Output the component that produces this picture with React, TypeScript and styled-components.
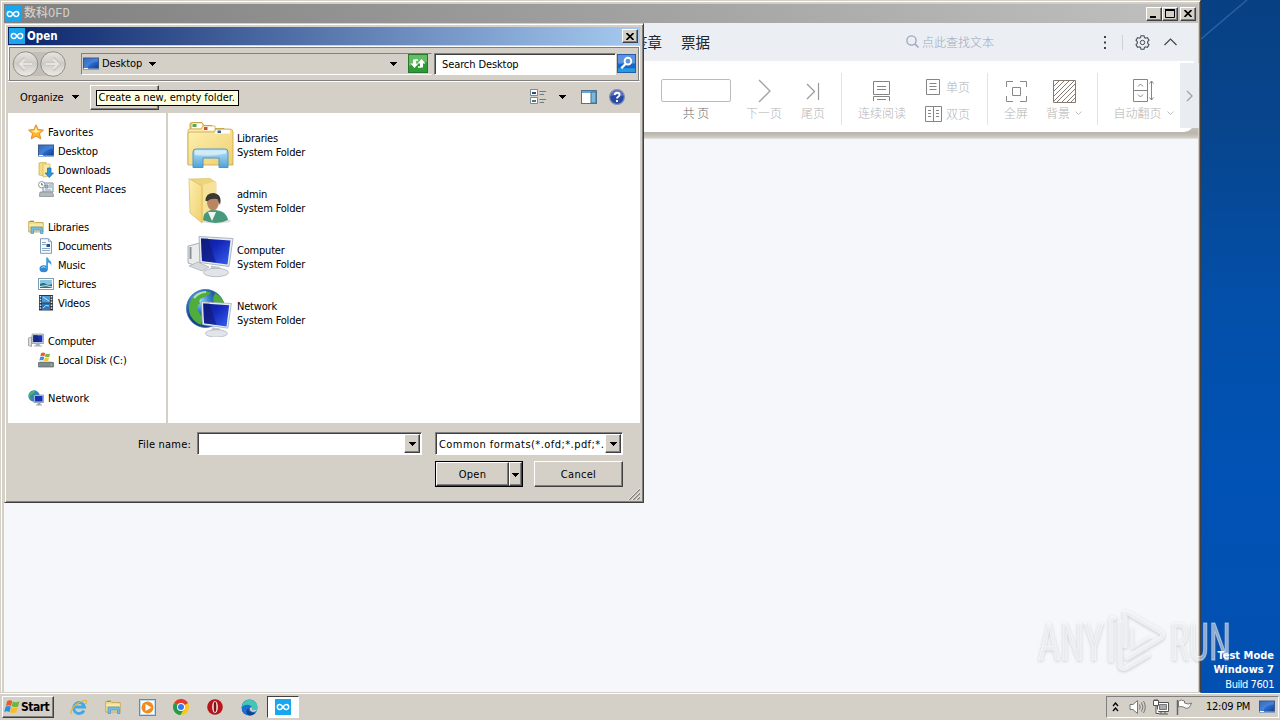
import React from 'react';
import styled, { createGlobalStyle, css } from 'styled-components';

const face = '#d4d0c8';

const GlobalStyle = createGlobalStyle`
  *, *::before, *::after { box-sizing: border-box; }
  body { margin: 0; overflow: hidden; }
  svg { display: block; flex: none; }
`;

const raised = css`
  border: 1px solid;
  border-color: #fff #404040 #404040 #fff;
  box-shadow: inset -1px -1px 0 #808080;
  background: ${face};
`;
const sunken = css`
  border: 1px solid;
  border-color: #808080 #fff #fff #808080;
  box-shadow: inset 1px 1px 0 #404040;
  background: #fff;
`;

const Desktop = styled.div`
  position: relative;
  display: flex;
  flex-direction: column;
  width: 1280px;
  height: 720px;
  overflow: hidden;
  color: #000;
  font: 11px/14px 'DejaVu Sans Condensed', 'DejaVu Sans', 'Noto Sans CJK SC', sans-serif;
  font-stretch: condensed;
  white-space: nowrap;
`;
const Workspace = styled.div`
  position: relative;
  flex: 1;
  display: flex;
  background: linear-gradient(180deg, #084083 0, #07458d 130px, #034fa9 300px, #0152b5 480px, #0250b1 693px);
`;
const Wallpaper = styled.div`
  width: 79px;
  display: flex;
  flex-direction: column;
  justify-content: space-between;
  align-items: flex-end;
`;
const BuildInfo = styled.div`
  color: #fff;
  text-align: right;
  padding-right: 6px;
  position: relative;
  z-index: 6;
`;
const BuildBold = styled.div`
  font-weight: bold;
`;
const BuildLine = styled.div`
  line-height: 16px;
  letter-spacing: -0.45px;
`;

/* ---------- main application window ---------- */
const AppWindow = styled.div`
  width: 1201px;
  height: 693px;
  display: flex;
  flex-direction: column;
  background: ${face};
  border: 1px solid;
  border-color: ${face} #404040 ${face} ${face};
  box-shadow: inset 1px 1px 0 #fff, inset -1px 0 0 #808080;
  padding: 3px 2px 0 3px;
`;
const TitleBar = styled.div<{ $inactive?: boolean }>`
  height: ${p => (p.$inactive ? 19 : 18)}px;
  display: flex;
  align-items: center;
  gap: 2px;
  padding: 0 2px 0 1px;
  color: ${p => (p.$inactive ? face : '#fff')};
  font-weight: bold;
  background: ${p =>
    p.$inactive
      ? 'linear-gradient(90deg, #808080, #c0c0c0)'
      : 'linear-gradient(90deg, #0a246a, #a6caf0)'};
`;
const TitleText = styled.span<{ $mono?: boolean }>`
  flex: 1;
  font-size: ${p => (p.$mono ? 12 : 11.5)}px;
  ${p => p.$mono && css`
    font-family: 'Liberation Mono', 'Noto Sans CJK SC', monospace;
    font-weight: 500;
    padding-left: 1px;
  `}
`;
const CaptionButton = styled.div<{ $gap?: boolean }>`
  ${raised}
  width: 16px;
  height: 14px;
  margin-left: ${p => (p.$gap ? 2 : 0)}px;
  display: flex;
  align-items: center;
  justify-content: center;
`;
const CaptionGroup = styled.div`
  display: flex;
`;
const MenuBar = styled.div`
  height: 38px;
  display: flex;
  align-items: center;
  padding: 0 21px 0 629px;
  background: #ebeff3;
  font-family: 'Noto Sans CJK SC', sans-serif;
  color: #20262c;
`;
const MenuTab = styled.span`
  font-size: 14.5px;
  margin-right: 19px;
`;
const SearchHint = styled.div`
  display: flex;
  align-items: center;
  gap: 3px;
  margin-left: 177px;
  padding-bottom: 1px;
  flex: 1;
  font-size: 12px;
  font-weight: 300;
  color: #a0a9c0;
`;
const MenuTools = styled.div`
  display: flex;
  align-items: center;
`;
const MenuRule = styled.i`
  width: 1px;
  height: 15px;
  margin: 0 12px 0 15px;
  background: #cdd1d8;
`;
const RibbonArea = styled.div`
  height: 78px;
  padding-right: 4px;
  background: linear-gradient(180deg, #ebeff3 0, #ebeff3 64px, #c8c5bf 66px, #b9b5ac 72px, #cbc8c1 76px, #e4e3e0 78px);
`;
const Ribbon = styled.div`
  height: 71px;
  display: flex;
  padding-left: 657px;
  background: #fff;
  border-radius: 0 0 10px 0;
  font-family: 'Noto Sans CJK SC', sans-serif;
  font-size: 12px;
  font-weight: 300;
  color: #b3b3b3;
`;
const Cell = styled.div<{ $w: number; $ml?: number; $dark?: boolean }>`
  flex: none;
  width: ${p => p.$w}px;
  margin-left: ${p => p.$ml ?? 0}px;
  padding-top: 16px;
  display: flex;
  flex-direction: column;
  align-items: center;
  color: ${p => (p.$dark ? '#6c6c6c' : 'inherit')};
`;
const CellIcon = styled.div`
  height: 28px;
  display: flex;
  align-items: center;
`;
const CellLabel = styled.div`
  display: flex;
  align-items: center;
  gap: 5px;
  line-height: 16px;
`;
const PageInput = styled.div`
  width: 70px;
  height: 23px;
  border: 1px solid #bcbcbc;
  border-radius: 2px;
  margin: 2px 0 3px;
`;
const RibbonRule = styled.i<{ $ml: number }>`
  flex: none;
  width: 1px;
  height: 52px;
  margin: 12px 0 0 ${p => p.$ml}px;
  background: #e4e4e4;
`;
const Stack = styled.div`
  flex: none;
  display: flex;
  flex-direction: column;
  gap: 9px;
  width: 48px;
  margin-left: 13px;
  padding-top: 17px;
`;
const StackRow = styled.div`
  display: flex;
  align-items: center;
  gap: 4px;
  height: 18px;
`;
const ScrollStrip = styled.div`
  flex: none;
  width: 19px;
  height: 65px;
  margin: 2px 0 0 4px;
  display: flex;
  align-items: center;
  justify-content: center;
  background: #e9edf2;
`;
const Canvas = styled.div`
  flex: 1;
  background: #f5f7fa;
`;

/* ---------- file dialog ---------- */
const Dialog = styled.div`
  position: absolute;
  left: 4px;
  top: 23px;
  width: 640px;
  height: 480px;
  padding: 3px;
  display: flex;
  flex-direction: column;
  background: ${face};
  border: 1px solid;
  border-color: ${face} #404040 #404040 ${face};
  box-shadow: inset 1px 1px 0 #fff, inset -1px -1px 0 #808080;
`;
const NavBar = styled.div`
  height: 35px;
  margin-top: 1px;
  display: flex;
  align-items: center;
  padding-left: 3px;
  border: 1px solid;
  border-color: #fff #fff #808080 #fff;
  box-shadow: inset 1px 1px 0 #808080, inset -1px 0 0 #808080, 0 1px 0 #fff;
`;
const AddressBar = styled.div`
  width: 351px;
  height: 22px;
  margin-left: 15px;
  display: flex;
  align-items: center;
  padding: 0 3px 0 1px;
  border: 1px solid;
  border-color: #808080 ${face} #fff #808080;
`;
const Crumb = styled.span`
  margin: 0 7px 0 3px;
  letter-spacing: -0.1px;
`;
const Spacer = styled.span`
  flex: 1;
`;
const IconSlot = styled.span<{ $ml: number }>`
  margin-left: ${p => p.$ml}px;
`;
const SearchField = styled.div`
  ${sunken}
  width: 182px;
  height: 22px;
  margin-left: 2px;
  padding: 4px 7px;
  letter-spacing: -0.1px;
`;
const CommandBar = styled.div`
  height: 32px;
  display: flex;
  align-items: center;
  padding: 0 15px 0 12px;
`;
const CommandLabel = styled.span`
  padding-top: 1px;
  letter-spacing: -0.1px;
`;
const NewFolder = styled.div`
  position: relative;
  width: 69px;
  height: 25px;
  margin-left: 11px;
  ${raised}
`;
const Tooltip = styled.div`
  position: absolute;
  left: 5px;
  top: 4px;
  height: 16px;
  width: 143px;
  padding: 0 2px;
  border: 1px solid #000;
  background: #ffffe1;
  letter-spacing: -0.05px;
`;
const Panes = styled.div`
  height: 310px;
  display: flex;
  background: #fff;
`;
const Tree = styled.div`
  width: 158px;
  padding: 9px 0 0 20px;
  display: flex;
  flex-direction: column;
  gap: 19px;
`;
const TreeRow = styled.div<{ $sub?: boolean }>`
  height: 19px;
  display: flex;
  align-items: center;
  gap: 4px;
  padding-left: ${p => (p.$sub ? 10 : 0)}px;
`;
const TreeName = styled.span<{ $ls: number }>`
  padding-top: 3px;
  letter-spacing: ${p => p.$ls}px;
`;
const Splitter = styled.div`
  width: 2px;
  background: ${face};
`;
const FileList = styled.div`
  flex: 1;
  padding: 4px 0 0 18px;
`;
const FileRow = styled.div`
  height: 56px;
  display: flex;
  align-items: center;
  gap: 3px;
`;
const FileText = styled.div`
  padding-top: 2px;
  letter-spacing: -0.2px;
`;
const Footer = styled.div`
  flex: 1;
  display: flex;
  flex-direction: column;
  align-items: flex-end;
  gap: 6px;
  padding: 9px 17px 0 0;
  position: relative;
`;
const FooterRow = styled.div`
  display: flex;
  align-items: center;
`;
const FieldLabel = styled.span`
  padding-top: 2px;
  letter-spacing: 0.2px;
`;
const ComboBox = styled.div<{ $w: number; $ml: number }>`
  ${sunken}
  width: ${p => p.$w}px;
  height: 23px;
  margin-left: ${p => p.$ml}px;
  padding: 1px 1px 1px 3px;
  display: flex;
  align-items: center;
  justify-content: space-between;
  overflow: hidden;
`;
const ComboText = styled.span`
  padding-top: 2px;
  letter-spacing: 0.44px;
`;
const DropButton = styled.span`
  ${raised}
  width: 16px;
  height: 19px;
  display: flex;
  flex: none;
  align-items: center;
  justify-content: center;
`;
const SplitButton = styled.div`
  width: 88px;
  height: 26px;
  border: 1px solid #000;
  display: flex;
  margin-right: 11px;
`;
const ButtonFace = styled.div<{ $w: number; $h?: number }>`
  ${raised}
  width: ${p => p.$w}px;
  height: ${p => p.$h ?? 24}px;
  padding-top: 2px;
  display: flex;
  align-items: center;
  justify-content: center;
  letter-spacing: 0.3px;
`;
const Grip = styled.div`
  position: absolute;
  right: 0;
  bottom: -1px;
`;

/* ---------- taskbar ---------- */
const Taskbar = styled.div`
  height: 27px;
  display: flex;
  align-items: center;
  padding: 2px 0 2px 2px;
  background: ${face};
  border-top: 1px solid #fff;
  position: relative;
`;
const StartButton = styled.div`
  ${raised}
  width: 52px;
  height: 22px;
  display: flex;
  align-items: center;
  gap: 1px;
  padding-left: 1px;
  font-weight: bold;
  font-size: 12px;
  letter-spacing: -0.5px;
`;
const Launchers = styled.div`
  display: flex;
  align-items: center;
  margin-left: 9px;
  flex: 1;
`;
const Launcher = styled.div`
  width: 34px;
  display: flex;
  justify-content: center;
  padding-right: 2px;
`;
const ActiveTask = styled.div`
  width: 32px;
  height: 22px;
  display: flex;
  align-items: center;
  justify-content: center;
  border: 1px solid;
  border-color: #404040 #fff #fff #404040;
  background: #fff;
`;
const Tray = styled.div`
  width: 173px;
  height: 22px;
  margin-right: 1px;
  display: flex;
  align-items: center;
  padding-left: 5px;
  border: 1px solid;
  border-color: #808080 #fff #fff #808080;
`;
const Clock = styled.span`
  margin: 0 9px 0 13px;
  letter-spacing: -0.25px;
`;
const Watermark = styled.div`
  position: absolute;
  left: 1030px;
  top: 600px;
  pointer-events: none;
  filter: drop-shadow(0 1px 1.5px rgba(90, 100, 110, 0.45));
`;

/* ---------- icons ---------- */
const Logo = ({ s = 16 }: { s?: number }) => (
  <svg width={s} height={s} viewBox="0 0 16 16">
    <rect width="16" height="16" fill="#18a6ee" />
    <path d="M8 8C6.8 6.200 6 5.500 4.800 5.500a2.500 2.500 0 0 0 0 5C6 10.500 6.800 9.800 8 8s2-2.500 3.200-2.500a2.500 2.500 0 0 1 0 5C10 10.500 9.200 9.800 8 8z" fill="none" stroke="#fff" strokeWidth="1.500" />
  </svg>
);
const Arrow = () => (
  <svg width="7" height="4" viewBox="0 0 7 4" shapeRendering="crispEdges"><path d="M0 0h7L3.500 4z" /></svg>
);
const CloseX = () => (
  <svg width="8" height="7" viewBox="0 0 8 7"><path d="M.5 0l7 7M7.500 0l-7 7" stroke="#000" strokeWidth="1.700" /></svg>
);
const Monitor = () => (
  <svg width="16" height="16" viewBox="0 0 16 16">
    <defs><linearGradient id="mon" x2="1" y2="1"><stop stopColor="#173f96" /><stop offset=".5" stopColor="#2c6fd0" /><stop offset="1" stopColor="#123c86" /></linearGradient></defs>
    <rect x=".5" y="2" width="15" height="11" fill="url(#mon)" stroke="#3a5a8c" />
    <path d="M1 2.500h14v3Q7 5.500 4 12H1z" fill="#6aa2e8" opacity=".4" />
    <path d="M0 13h16" stroke="#8fb0da" /><path d="M1 12.500h4" stroke="#fff" />
  </svg>
);
const Star = () => (
  <svg width="16" height="16" viewBox="0 0 16 16"><path d="M8 .8l2.200 4.800 5.200.5-3.900 3.500 1.200 5.200L8 12.100l-4.700 2.700 1.200-5.200L.6 6.100l5.200-.5z" fill="#fdb62e" stroke="#e08a2a" /><path d="M8 3l1.400 3.600 3.300.3L8 9 3 7l3.500-.4z" fill="#fff0a0" /></svg>
);
const Download = () => (
  <svg width="16" height="16" viewBox="0 0 16 16"><path d="M1 1l7-1v14l-7-1z" fill="#f4dc84" stroke="#c9a64a" strokeWidth=".7" /><path d="M5 2h7v12l-7 1z" fill="#f9e9a4" stroke="#d2b45d" strokeWidth=".7" /><path d="M9.500 6h3.500v5h2.500L11.300 15.600 7 11h2.500z" fill="#2f94dc" stroke="#1c6cae" strokeWidth=".7" /></svg>
);
const Recent = () => (
  <svg width="16" height="16" viewBox="0 0 16 16"><path d="M5 2h10v9H5z" fill="#e9f1f5" stroke="#7b929d" /><path d="M7 4h3v3H7zM11 4h3M11 6h3M7 9h6" fill="#9db8c6" stroke="#6e8c9c" strokeWidth=".8" /><path d="M2 11h12l1.500 3v1.500h-14V14z" fill="#b2b8bb" stroke="#83898c" strokeWidth=".7" /><circle cx="3.700" cy="3.700" r="3.200" fill="#fff" stroke="#8d999f" /><path d="M3.700 2v2h1.500" fill="none" stroke="#446" strokeWidth=".8" /></svg>
);
const Library = () => (
  <svg width="16" height="16" viewBox="0 0 16 16"><path d="M.7 2.500h5l1 1h8.500V13H.7z" fill="#f3dc86" stroke="#c3a04b" strokeWidth=".8" /><path d="M2 2.300h4" stroke="#68a555" strokeWidth="1.300" /><path d="M1 6h14" stroke="#fff5be" /><path d="M3 8h11l1 6.500h-2.500V11h-7v3.500H3z" fill="#73bde9" stroke="#4a92c4" strokeWidth=".7" /></svg>
);
const Doc = () => (
  <svg width="16" height="16" viewBox="0 0 16 16"><path d="M2.500.7h8l3 3v11.600h-11z" fill="#f5fafe" stroke="#7f9bb8" /><path d="M10.500.7v3h3" fill="#cadbe9" stroke="#7f9bb8" strokeWidth=".7" /><path d="M4 4.500h4M4 6.500h4M4 10.500h8M4 12.500h8" stroke="#7095b5" strokeWidth=".8" /><path d="M8.500 6H12v3H8.500z" fill="#27508a" /></svg>
);
const Music = () => (
  <svg width="16" height="16" viewBox="0 0 16 16"><ellipse cx="5.700" cy="11.700" rx="4.200" ry="3.500" fill="#3189d2" /><path d="M8.200 12V.5H10c.3 3 4.700 3.500 3.200 8.200-.4-2.700-2.800-3-3.200-3.200v6.500z" fill="#3c9fdf" /><path d="M3.500 10.500q2-1.500 4 0" stroke="#b7e2fa" fill="none" /></svg>
);
const Picture = () => (
  <svg width="16" height="16" viewBox="0 0 16 16"><rect x=".5" y="2.500" width="15" height="11" fill="#fff" stroke="#7aa0b8" /><path d="M2 4h12v8H2z" fill="#8bc5e2" /><path d="M2 8q4-2 6 0t6 0v4H2z" fill="#2c6f83" /><path d="M2 10.500q6-2 12 .500" stroke="#d6e8e6" fill="none" /></svg>
);
const Video = () => (
  <svg width="16" height="16" viewBox="0 0 16 16"><path d="M1 0h14v15.500H1z" fill="#32383f" /><path d="M4 1h8v6.500H4z" fill="#4a9bdc" /><path d="M4 8.500h8V15H4z" fill="#2b75be" /><path d="M2.500 1v14M13.500 1v14" stroke="#dce3e8" strokeWidth="1.500" strokeDasharray="1.500 1.300" /><path d="M5 2l6 4M5 13q3-4 6-2" stroke="#b8e3fa" fill="none" /></svg>
);
const SmallPC = () => (
  <svg width="16" height="16" viewBox="0 0 16 16"><path d="M.5 5l3-1v9.500l-3-1z" fill="#dedede" stroke="#8a8a8a" strokeWidth=".7" /><path d="M4 1h11.500v9.500H4z" fill="#ccd3dd" stroke="#8b95a5" strokeWidth=".7" /><path d="M5.300 2.300h9v6.800h-9z" fill="#1730b8" /><path d="M5.300 2.300h4l2 6.800h-6z" fill="#172a80" /><path d="M8 10.500h3.500l.5 2h2v1H6v-1h1.500z" fill="#a9b1bc" /></svg>
);
const Disk = () => (
  <svg width="16" height="16" viewBox="0 0 16 16"><path d="M3 1.200q2.200-1.500 4.200 0L6.400 4.300q-2-1-4 0z" fill="#ee5a2f" /><path d="M7.700 1.400q2 1.200 4.600 0L11.300 4.700q-2 1-4.400 0z" fill="#79b84a" /><path d="M2.200 5q2-1.200 4 0l-.8 3.500q-2-1-4 0z" fill="#3b91d8" /><path d="M6.800 5.400q2 1.200 4.300 0l-.9 3.500q-2 1-4.300 0z" fill="#f6c53a" /><path d="M2 9h11l2.500 2H.5z" fill="#d6d9db" /><path d="M.5 10.500h15V15H.5z" fill="#7e8a8d" stroke="#596467" strokeWidth=".7" /><path d="M12.500 13h1.500" stroke="#8cf078" /></svg>
);
const SmallNet = () => (
  <svg width="16" height="16" viewBox="0 0 16 16"><circle cx="6" cy="6" r="5.700" fill="#2d86bd" /><path d="M1 4q3-4 7-3.500Q6 4 3 5t1 5Q0 8 1 4z" fill="#58b64c" /><path d="M6 5h9.500v7.500H6z" fill="#c3ccda" stroke="#707f96" strokeWidth=".6" /><path d="M7 6h7.500v5.500H7z" fill="#1730b8" /><path d="M9.500 12.500h3v2h1.500v1H8v-1h1.500z" fill="#9ba5b2" /></svg>
);

const BigDefs = () => (
  <defs>
    <linearGradient id="fold" x2="1" y2="1"><stop stopColor="#fdf0b2" /><stop offset="1" stopColor="#efcf6d" /></linearGradient>
    <linearGradient id="blue" x2="0" y2="1"><stop stopColor="#c0e4f8" /><stop offset="1" stopColor="#4ea2d8" /></linearGradient>
    <linearGradient id="scr" x2="1" y2="1"><stop stopColor="#0d1c82" /><stop offset=".4" stopColor="#1427b8" /><stop offset="1" stopColor="#3560f0" /></linearGradient>
    <radialGradient id="globe" cx=".35" cy=".3"><stop stopColor="#a9dcf2" /><stop offset=".5" stopColor="#3984cc" /><stop offset="1" stopColor="#123f8c" /></radialGradient>
  </defs>
);
const BigLibraries = () => (
  <svg width="48" height="48" viewBox="0 0 48 48"><BigDefs />
    <path d="M4 43V3q0-1.500 2-1.500h10l2 3h8l2 3h10l2 2h4q2 0 2 3v29z" fill="#eccf74" stroke="#bd963f" strokeWidth=".8" />
    <path d="M6 2.500h10v5H6z" fill="#fff" /><path d="M6.500 3h4v3h-4z" fill="#55a846" />
    <path d="M2 43V10q0-2 2-2h11l2-3h12v5h15v33z" fill="url(#fold)" stroke="#cba54c" strokeWidth=".8" />
    <path d="M17.500 5.500h11v4h-11z" fill="#fff" /><path d="M18 6h3.500v3H18z" fill="#d54d31" />
    <path d="M2 44V13q0-2 2-2h24l2-3h14q3 0 3 3v33z" fill="url(#fold)" stroke="#cba54c" strokeWidth=".8" />
    <path d="M30 9h14v3.500H29z" fill="#fff" /><path d="M31.500 9.500H35V12h-3.500z" fill="#38618a" />
    <path d="M7 46.500V31q0-3 3-3h29q3 0 3 3v15.500h-9V37H17v9.500z" fill="url(#blue)" stroke="#4d98c8" />
    <path d="M9 29.500h31v3Q25 36 9 34z" fill="#e6f6fd" opacity=".65" />
  </svg>
);
const BigAdmin = () => (
  <svg width="48" height="48" viewBox="0 0 48 48">
    <ellipse cx="30" cy="44" rx="15" ry="2.500" fill="#888" opacity=".25" />
    <path d="M5 2l19-.5 6 4v34l-14 5z" fill="#f0d47c" stroke="#d9b75e" strokeWidth=".6" />
    <path d="M17 8l13-4v34l-13 6z" fill="#f7e29a" />
    <path d="M3 1.500l13 7.500v37L4 36z" fill="url(#fold)" stroke="#d9b75e" strokeWidth=".7" />
    <path d="M17 43q0-8 8-10 15-1 17 10-12 6-25 0z" fill="#47997c" />
    <path d="M22 35l4 9 4-9z" fill="#eef5f4" />
    <ellipse cx="27" cy="25" rx="6" ry="8.500" fill="#b98562" />
    <path d="M19.500 24q0-8 8-8 9 1 6.500 12l-2.500-6q-7-1-10 2z" fill="#393833" />
  </svg>
);
const ScreenArt = () => (
  <g><path d="M13 2l34 2-4 28-29-4z" fill="#e8edf2" stroke="#9ba5b0" strokeWidth=".8" /><path d="M15 4l29.500 2-3 24L16 26.500z" fill="url(#scr)" /><path d="M15 4h7l8 24-14-1.500z" fill="#101b75" opacity=".6" /><path d="M25 31l9 1.500 1 6-11-1z" fill="#c2c8ce" /><ellipse cx="30" cy="38" rx="12.500" ry="4.200" fill="#e1e5e9" stroke="#abb2b9" strokeWidth=".8" /></g>
);
const BigComputer = () => (
  <svg width="48" height="48" viewBox="0 0 48 48"><path d="M2 13l12-3v24L2 30z" fill="#e9ebec" stroke="#9ba0a4" strokeWidth=".8" /><path d="M4.500 14v12" stroke="#899198" strokeWidth="2" /><path d="M3 33l9-4 11 5-7 4z" fill="#d7dadd" stroke="#a1a6aa" strokeWidth=".6" /><g transform="translate(0 1.500)"><ScreenArt /></g></svg>
);
const BigNetwork = () => (
  <svg width="48" height="48" viewBox="0 0 48 48"><circle cx="19.500" cy="19.500" r="19" fill="url(#globe)" stroke="#3571a4" strokeWidth=".8" /><path d="M3 17Q5 6 16 3q6-2 9 1-5 4-9 5t-2 6q-4 1-2 7l5 7-2 7Q2 30 3 17zM29 4q8 4 9 11l-8 3q-5-7-1-14z" fill="#4ead3b" /><path d="M8 9q5-6 12-6" stroke="#e3f6d6" strokeWidth="2" fill="none" opacity=".7" /><g transform="translate(4 11) scale(.88)"><ScreenArt /></g></svg>
);
const RoundNav = () => (
  <svg width="54" height="28" viewBox="0 0 54 28">
    <defs><linearGradient id="rn" x2="0" y2="1"><stop stopColor="#e7e5e0" /><stop offset=".48" stopColor="#cfccc6" /><stop offset="1" stopColor="#edebe7" /></linearGradient></defs>
    <path d="M13 2h28v24H13z" fill="#c2bfb9" />
    <circle cx="13.500" cy="14" r="12.300" fill="url(#rn)" stroke="#8f8e8a" /><circle cx="41" cy="14" r="12.300" fill="url(#rn)" stroke="#8f8e8a" />
    <path d="M20 14H7m6-6-6 6 6 6M34 14h13m-6-6 6 6-6 6" fill="none" stroke="#c8c5bf" strokeWidth="3.500" /><path d="M20 14H8m5-5-5 5 5 5M34 14h12m-5-5 5 5-5 5" fill="none" stroke="#e6e4e0" strokeWidth="2.200" />
  </svg>
);
const Refresh = () => (
  <svg width="20" height="19" viewBox="0 0 20 19"><rect x=".5" y=".5" width="19" height="18" fill="#2e9b37" stroke="#27772f" /><path d="M1 1h18v7Q10 8 1 12z" fill="#84ce7d" opacity=".65" /><path d="M5 5.500h3v4h2.500L6.500 14 2.500 9.500H5z" fill="#fff" /><path d="M15 13.500h-3v-4H9.500L13.500 5l4 4.500H15z" fill="#fff" /><path d="M7 6h3M10 13h3" stroke="#fff" strokeWidth="1.500" /></svg>
);
const SearchBlue = () => (
  <svg width="19" height="19" viewBox="0 0 20 20"><rect x=".5" y=".5" width="19" height="19" fill="#1766c8" stroke="#2259a8" /><path d="M1 1h18v9H1z" fill="#7ba9e6" opacity=".7" /><path d="M1 15h18v4H1z" fill="#28b2eb" opacity=".7" /><circle cx="11.500" cy="7.500" r="3.500" fill="none" stroke="#fff" strokeWidth="2" /><path d="M9 10.500L4.500 15" stroke="#fff" strokeWidth="2.500" /></svg>
);
const ViewIcon = () => (
  <svg width="17" height="16" viewBox="0 0 17 16"><path d="M.5.500h7v6h-7zM.5 8.500h7v6h-7z" fill="#fff" stroke="#788b99" /><path d="M2 4h4" stroke="#264d81" strokeWidth="2" /><path d="M2 12h4" stroke="#477e69" strokeWidth="2" /><path d="M9.500 2.500H16M9.500 5.500H14M9.500 10.500H16M9.500 13.500H14" stroke="#6c7a86" /></svg>
);
const PaneIcon = () => (
  <svg width="16" height="14" viewBox="0 0 16 14"><rect x=".5" y=".5" width="15" height="13" fill="#fff" stroke="#4e7291" /><path d="M1 2h14" stroke="#6ba6ca" strokeWidth="2" /><path d="M10 2h5v11h-5z" fill="#7eb7da" stroke="#3e7195" /></svg>
);
const HelpIcon = () => (
  <svg width="16" height="16" viewBox="0 0 16 16"><circle cx="8" cy="8" r="7.400" fill="#2949a5" stroke="#8390b8" strokeWidth="1.200" /><path d="M2 7a6 6 0 0 1 12 0Q8 5 2 7z" fill="#7790d4" opacity=".6" /><path d="M5.500 6Q6 3.700 8.100 3.700c3.200 0 3.200 3.100 1 4.100Q8 8.400 8 9.500M8 11v2" fill="none" stroke="#fff" strokeWidth="1.900" /></svg>
);
const ChevronTiny = () => (
  <svg width="7" height="4" viewBox="0 0 7 4"><path d="M.5.500l3 3 3-3" fill="none" stroke="#c2c2c2" /></svg>
);
const WinFlag = () => (
  <svg width="16" height="16" viewBox="0 0 16 16"><path d="M3.200 2q2.700-1.700 5 0L7 6.900Q4.600 5.400 1.900 6.900z" fill="#e65a2b" /><path d="M8.800 2.500q2.700 1.300 6.700 0L14 7.500Q10.400 8.800 7.600 7.300z" fill="#72b33d" /><path d="M1.600 7.800q2.800-1.500 5.200 0L5.500 12.900q-2.600-1.500-5.300 0z" fill="#2a8edb" /><path d="M7.400 8.300q2.700 1.400 6.300 0l-1.400 5q-3.300 1.400-6.200 0z" fill="#f7bd27" /></svg>
);

const tree = [
  [['Favorites', Star, 0.1], ['Desktop', Monitor, -0.15], ['Downloads', Download, -0.2], ['Recent Places', Recent, -0.05]],
  [['Libraries', Library, -0.2], ['Documents', Doc, -0.3], ['Music', Music, -0.2], ['Pictures', Picture, -0.1], ['Videos', Video, -0.15]],
  [['Computer', SmallPC, -0.25], ['Local Disk (C:)', Disk, -0.17]],
  [['Network', SmallNet, 0]],
] as [string, React.FC, number][][];

const files: [string, React.FC][] = [
  ['Libraries', BigLibraries],
  ['admin', BigAdmin],
  ['Computer', BigComputer],
  ['Network', BigNetwork],
];

function OpenDialog() {
  return (
    <Dialog>
      <TitleBar>
        <Logo /><TitleText>Open</TitleText>
        <CaptionButton><CloseX /></CaptionButton>
      </TitleBar>
      <NavBar>
        <RoundNav />
        <AddressBar>
          <Monitor /><Crumb>Desktop</Crumb><Arrow />
          <Spacer /><Arrow />
          <IconSlot $ml={11}><Refresh /></IconSlot>
        </AddressBar>
        <SearchField>Search Desktop</SearchField>
        <IconSlot $ml={1}><SearchBlue /></IconSlot>
      </NavBar>
      <CommandBar>
        <CommandLabel>Organize</CommandLabel>
        <IconSlot $ml={8}><Arrow /></IconSlot>
        <NewFolder><Tooltip>Create a new, empty folder.</Tooltip></NewFolder>
        <Spacer />
        <ViewIcon />
        <IconSlot $ml={12}><Arrow /></IconSlot>
        <IconSlot $ml={15}><PaneIcon /></IconSlot>
        <IconSlot $ml={12}><HelpIcon /></IconSlot>
      </CommandBar>
      <Panes>
        <Tree>
          {tree.map((group, g) => (
            <div key={g}>
              {group.map(([name, Icon, ls], i) => (
                <TreeRow key={name} $sub={i > 0}><Icon /><TreeName $ls={ls}>{name}</TreeName></TreeRow>
              ))}
            </div>
          ))}
        </Tree>
        <Splitter />
        <FileList>
          {files.map(([name, Icon]) => (
            <FileRow key={name}><Icon /><FileText>{name}<br />System Folder</FileText></FileRow>
          ))}
        </FileList>
      </Panes>
      <Footer>
        <FooterRow>
          <FieldLabel>File name:</FieldLabel>
          <ComboBox $w={225} $ml={6}><span /><DropButton><Arrow /></DropButton></ComboBox>
          <ComboBox $w={188} $ml={13}>
            <ComboText>Common formats(*.ofd;*.pdf;*.</ComboText>
            <DropButton><Arrow /></DropButton>
          </ComboBox>
        </FooterRow>
        <FooterRow>
          <SplitButton>
            <ButtonFace $w={73}>Open</ButtonFace>
            <ButtonFace $w={13}><Arrow /></ButtonFace>
          </SplitButton>
          <ButtonFace $w={89} $h={26}>Cancel</ButtonFace>
        </FooterRow>
        <Grip>
          <svg width="12" height="12" viewBox="0 0 12 12"><path d="M1 12L12 1M5 12l7-7M9 12l3-3" stroke="#808080" strokeWidth="1.400" /><path d="M0 12L12 0M4 12l8-8M8 12l4-4" stroke="#fff" strokeWidth=".7" /></svg>
        </Grip>
      </Footer>
    </Dialog>
  );
}

function ReaderWindow() {
  return (
    <AppWindow>
      <TitleBar $inactive>
        <Logo /><TitleText $mono>数科OFD</TitleText>
        <CaptionGroup>
          <CaptionButton><svg width="8" height="8"><path d="M0 7h6" stroke="#000" strokeWidth="2" /></svg></CaptionButton>
          <CaptionButton><svg width="10" height="9"><path d="M.5 1h9M.5 1v7.500h9V1" fill="none" stroke="#000" /><path d="M0 1h10" stroke="#000" strokeWidth="2" /></svg></CaptionButton>
          <CaptionButton $gap><CloseX /></CaptionButton>
        </CaptionGroup>
      </TitleBar>
      <MenuBar>
        <MenuTab>签章</MenuTab><MenuTab>票据</MenuTab>
        <SearchHint>
          <svg width="13" height="13" viewBox="0 0 13 13"><circle cx="5.500" cy="5.500" r="4.600" fill="none" stroke="#9aa4be" strokeWidth="1.300" /><path d="M9 9l3.500 3.500" stroke="#9aa4be" strokeWidth="1.500" /></svg>
          点此查找文本
        </SearchHint>
        <MenuTools>
          <svg width="4" height="15"><path d="M1 1h2v2H1zM1 6.500h2v2H1zM1 12h2v2H1z" fill="#394149" /></svg>
          <MenuRule />
          <svg width="15" height="15" viewBox="0 0 15 15"><path d="M6 .8h3l.5 1.800 1.100.6 1.800-.6L14 5.200l-1.300 1.400v1.800L14 9.800l-1.600 2.600-1.800-.6-1.100.6-.5 1.800H6l-.5-1.800-1.100-.6-1.800.6L1 9.800l1.300-1.400V6.600L1 5.200l1.600-2.600 1.800.6 1.100-.6z" fill="none" stroke="#454d56" strokeWidth="1.100" /><circle cx="7.500" cy="7.500" r="2.200" fill="none" stroke="#454d56" /></svg>
          <IconSlot $ml={14}><svg width="13" height="8"><path d="M.5 7l6-6 6 6" fill="none" stroke="#3d454e" strokeWidth="1.200" /></svg></IconSlot>
        </MenuTools>
      </MenuBar>
      <RibbonArea>
        <Ribbon>
          <Cell $w={70} $dark><PageInput /><CellLabel>共 页</CellLabel></Cell>
          <Cell $w={54} $ml={6}>
            <CellIcon><svg width="13" height="24"><path d="M1 1l11 11L1 23" fill="none" stroke="#a0a0a0" strokeWidth="1.300" /></svg></CellIcon>
            <CellLabel>下一页</CellLabel>
          </Cell>
          <Cell $w={40} $ml={2}>
            <CellIcon><svg width="14" height="17"><path d="M1 1l7.500 7.500L1 16M12.500 0v17" fill="none" stroke="#999" strokeWidth="1.200" /></svg></CellIcon>
            <CellLabel>尾页</CellLabel>
          </Cell>
          <RibbonRule $ml={8} />
          <Cell $w={60} $ml={10}>
            <CellIcon><svg width="18" height="20"><path d="M.5.500h16v13H.5zM4 5.500h9M4 8.500h9M.5 20v-4.500h16V20M4 18.500h9" fill="none" stroke="#858585" /></svg></CellIcon>
            <CellLabel>连续阅读</CellLabel>
          </Cell>
          <Stack>
            <StackRow><svg width="17" height="18"><path d="M1.500 1.500h13v15h-13zM4.500 5.500h7M4.500 8.500h7M4.500 11.500h7" fill="none" stroke="#858585" /></svg>单页</StackRow>
            <StackRow><svg width="17" height="18"><path d="M.5 1.500h16v15H.5zM8.500 1v16M3 5.500h3M3 8.500h3M3 11.500h3M11 5.500h3M11 8.500h3M11 11.500h3" fill="none" stroke="#858585" /></svg>双页</StackRow>
          </Stack>
          <RibbonRule $ml={14} />
          <Cell $w={40} $ml={8}>
            <CellIcon><svg width="21" height="21"><path d="M.5 6V.5H7M14 .5h6.500V6M20.500 15v5.500H14M7 20.500H.5V15M6.500 6.500h8v8h-8z" fill="none" stroke="#888" /></svg></CellIcon>
            <CellLabel>全屏</CellLabel>
          </Cell>
          <Cell $w={44} $ml={6}>
            <CellIcon><svg width="23" height="23"><path d="M.5.500h22v22H.5zM1 6l5-5M1 11L11 1M1 16L16 1M1 21L21 1M4 22L22 4M9 22L22 9M14 22l8-8M18 22l4-4" fill="none" stroke="#857a72" /></svg></CellIcon>
            <CellLabel>背景<ChevronTiny /></CellLabel>
          </Cell>
          <RibbonRule $ml={11} />
          <Cell $w={65} $ml={13}>
            <CellIcon><svg width="22" height="24"><path d="M.5.500h14v22H.5zM.5 11.500h14M5 7.500L7.500 5 10 7.500M5 15.500L7.500 18l2.500-2.500M18.500 2v19M16.500 4.500l2-2.500 2 2.500M16.500 18.500l2 2.500 2-2.500" fill="none" stroke="#858585" /></svg></CellIcon>
            <CellLabel>自动翻页<ChevronTiny /></CellLabel>
          </Cell>
          <ScrollStrip><svg width="7" height="12"><path d="M1 1l5 5-5 5" fill="none" stroke="#98a0b2" strokeWidth="1.300" /></svg></ScrollStrip>
        </Ribbon>
      </RibbonArea>
      <Canvas />
    </AppWindow>
  );
}

export default function App() {
  return (
    <Desktop>
      <GlobalStyle />
      <Workspace>
        <ReaderWindow />
        <Wallpaper>
          <svg width="79" height="60"><path d="M0 39L46 0" stroke="#4c83bd" strokeWidth="1.500" opacity=".5" /></svg>
          <BuildInfo>
            <BuildBold>Test Mode</BuildBold>
            <BuildBold>Windows 7</BuildBold>
            <BuildLine>Build 7601</BuildLine>
          </BuildInfo>
        </Wallpaper>
        <OpenDialog />
        <Watermark>
          <svg width="210" height="80" viewBox="0 0 210 80">
            <g fill="#fff" fillOpacity=".5" stroke="#fff" strokeOpacity=".45" strokeWidth="1.200" fontFamily="Roboto, sans-serif" fontSize="51">
              <text x="8" y="59.500" textLength="66" lengthAdjust="spacingAndGlyphs">ANY</text>
              <text x="140" y="59.500" textLength="61" lengthAdjust="spacingAndGlyphs">RUN</text>
            </g>
            <g fill="none" stroke="#fff" strokeLinejoin="round" strokeLinecap="round">
              <path d="M81 60V21q0-3 3-3M95 46V12q3 0 5 2l31 18q3 3 0 6L97 58M90 22v42q0 6 6 4l22-13" strokeOpacity=".65" strokeWidth="5" />
              <path d="M102 28v20l18-11" strokeOpacity=".5" strokeWidth="3" />
            </g>
          </svg>
        </Watermark>
      </Workspace>
      <Taskbar>
        <StartButton><WinFlag />Start</StartButton>
        <Launchers>
          <Launcher>
            <svg width="18" height="18" viewBox="0 0 18 18"><path d="M14 12.500A5.500 5.500 0 1 1 14.500 9H5" fill="none" stroke="#3faae5" strokeWidth="2.800" /><path d="M2 15C-1 17 2 8 9 4.500S18 2 15.500 6" fill="none" stroke="#e7b53e" strokeWidth="1.300" /></svg>
          </Launcher>
          <Launcher><Library /></Launcher>
          <Launcher>
            <svg width="17" height="17" viewBox="0 0 17 17"><rect x=".5" y=".5" width="16" height="16" fill="#bfddf1" stroke="#568eb5" /><rect x="2" y="2" width="13" height="13" fill="#fff" /><circle cx="8.500" cy="8.500" r="6" fill="#f28a1d" /><path d="M6.500 5l6 3.500-6 3.500z" fill="#fff" /></svg>
          </Launcher>
          <Launcher>
            <svg width="16" height="16" viewBox="0 0 16 16"><circle cx="8" cy="8" r="8" fill="#fbc719" /><path d="M8 8L1.100 4A8 8 0 0 1 15 4z" fill="#e33b2e" /><path d="M8 8L1.100 4A8 8 0 0 0 7.500 16L11 10z" fill="#249a4b" /><circle cx="8" cy="8" r="4" fill="#fff" /><circle cx="8" cy="8" r="3" fill="#3879e9" /></svg>
          </Launcher>
          <Launcher>
            <svg width="16" height="16" viewBox="0 0 16 16"><circle cx="8" cy="8" r="7.800" fill="#b8141c" /><ellipse cx="8" cy="8" rx="2.900" ry="6" fill="#ece4df" /><ellipse cx="8" cy="8" rx="1.300" ry="5.200" fill="#7d1218" /></svg>
          </Launcher>
          <Launcher>
            <svg width="17" height="17" viewBox="0 0 17 17"><circle cx="8.500" cy="8.500" r="8" fill="#1670c4" /><path d="M1 8C2-2 16-1 16.500 8q0 4-5 3.500 0-5-5-5Q3 6.500 1 8z" fill="#45c5b5" /><path d="M1 8Q4 5 8 6q4 1 3 5-3-3-5 0-1 5 3 5.500Q0 16 1 8z" fill="#1b6fd0" /><path d="M7.500 9q-1 5 7 5-4 4-8 1.500Q4 12 7.500 9z" fill="#123f91" /><path d="M9 9q-1 3 3 4 3 0 4.500-3-3 2-5 1 0-2-1-3z" fill="#d4d0c8" /></svg>
          </Launcher>
          <ActiveTask><Logo /></ActiveTask>
        </Launchers>
        <Tray>
          <svg width="7" height="10"><path d="M1 4l2.500-3L6 4M1 9l2.500-3L6 9" fill="none" stroke="#000" strokeWidth="1.300" /></svg>
          <IconSlot $ml={10}><svg width="17" height="16" viewBox="0 0 17 16"><path d="M1 5.500h3L8.500 1.500v13L4 10.500H1z" fill="#fff" stroke="#777" /><path d="M10.500 5.500q1.500 2.500 0 5M12.500 3.500q3 4.500 0 9M14.500 2q3.500 6 0 12" fill="none" stroke="#777" /></svg></IconSlot>
          <IconSlot $ml={7}><svg width="16" height="16" viewBox="0 0 16 16"><path d="M4.500 3.500h11v9h-11zM8 12.500v2M12 12.500v2M6 15h9" fill="#fff" stroke="#555" /><path d="M6.500 5.500h7v5h-7z" fill="#aaa" stroke="#777" /><path d="M.5 1.500h5v5h-5zM2 0v2M4 0v2M3 6.500v8h3" fill="#fff" stroke="#555" /></svg></IconSlot>
          <IconSlot $ml={7}><svg width="17" height="16" viewBox="0 0 17 16"><path d="M1.500 1v15" stroke="#666" strokeWidth="1.500" /><path d="M2.500 2Q5 0 8.500 2v2q4 2 7 0-1 3-3 5-3 1-5-1-3-1-5 0z" fill="#fff" stroke="#777" /></svg></IconSlot>
          <Clock>12:09 PM</Clock>
          <Monitor />
        </Tray>
      </Taskbar>
    </Desktop>
  );
}
